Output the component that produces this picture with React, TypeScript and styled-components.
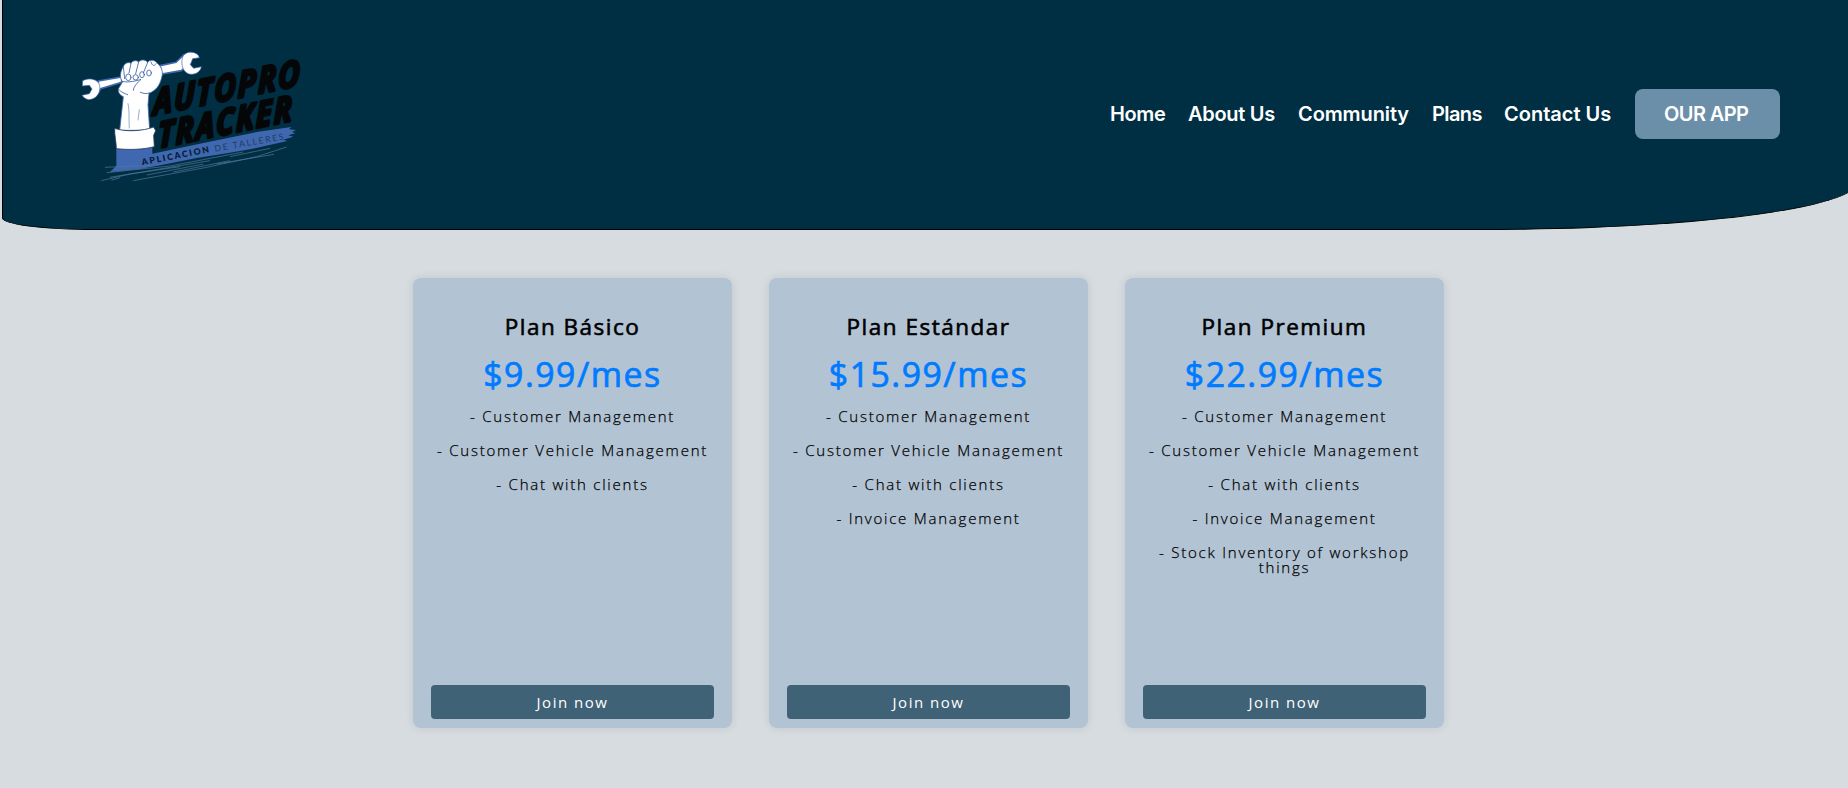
import React from "react";
import styled, { createGlobalStyle } from "styled-components";

const GlobalStyle = createGlobalStyle`
  * { box-sizing: border-box; }
  html, body { margin: 0; background: #d7dce0; }
  body { font-family: "Open Sans", "Noto Sans", sans-serif; overflow: hidden; }
`;

const Page = styled.div`
  height: 788px;
  overflow: hidden;
  background: #d7dce0;
`;

const Header = styled.header`
  display: flex;
  align-items: flex-start;
  justify-content: space-between;
  width: 1856px;
  height: 230px;
  margin-left: 2px;
  padding: 40px 77px 0 67px;
  background: #002f43;
  border: 1px solid #000;
  border-top: 0;
  border-radius: 0 0 376px 93px / 0 0 48px 12px;
`;

const LogoArt = styled.svg`
  display: block;
  width: 240px;
  height: 150px;
  overflow: visible;
`;

const Nav = styled.nav`
  display: flex;
  align-items: center;
  gap: 23px;
  height: 50px;
  margin-top: 49px;
`;

const NavLink = styled.a<{ $w: number; $spacing: number }>`
  width: ${(p) => p.$w}px;
  margin-left: -1px;
  margin-right: 1px;
  color: #fff;
  font: 600 20px/24px Inter, sans-serif;
  letter-spacing: ${(p) => p.$spacing}px;
  white-space: nowrap;
  text-decoration: none;
`;

const AppButton = styled.a`
  display: flex;
  align-items: center;
  width: 145px;
  height: 50px;
  padding-left: 29px;
  border-radius: 8px;
  background: #6b8fa9;
  color: #fff;
  font: 600 20px/24px Inter, sans-serif;
  letter-spacing: -0.6px;
  white-space: nowrap;
`;

const Plans = styled.main`
  display: flex;
  gap: 37px;
  padding: 48px 0 0 413px;
`;

const Card = styled.section`
  display: flex;
  flex-direction: column;
  align-items: center;
  width: 319px;
  height: 450px;
  padding: 37px 18px 9px;
  border-radius: 8px;
  background: #b2c3d4;
  box-shadow: 0 0 10px rgba(0, 0, 0, 0.1);
  text-align: center;
`;

const PlanName = styled.h2`
  margin: 0;
  color: #000;
  font-size: 22.5px;
  font-weight: 400;
  line-height: 24px;
  letter-spacing: 1.5px;
  -webkit-text-stroke: 0.6px #000;
`;

const Price = styled.p`
  margin: 18px 0 17px;
  color: #007bff;
  font-size: 33.8px;
  font-weight: 400;
  line-height: 35px;
  letter-spacing: 1.5px;
  -webkit-text-stroke: 0.7px #007bff;
`;

const Features = styled.ul`
  flex: 1;
  width: 283px;
  margin: 0;
  padding: 0;
  list-style: none;
`;

const Feature = styled.li`
  margin: 0 0 18.9px;
  color: #000;
  font-size: 15px;
  font-weight: 300;
  line-height: 15px;
  letter-spacing: 1.77px;
  -webkit-text-stroke: 0.25px #000;
`;

const JoinButton = styled.button`
  width: 282.4px;
  height: 34px;
  padding: 0;
  border: 0;
  border-radius: 4px;
  background: #406277;
  color: #fff;
  font: 400 15px/15px "Open Sans", sans-serif;
  letter-spacing: 1.5px;
`;

const links = [
  { label: "Home", w: 55, s: -0.4 },
  { label: "About Us", w: 87, s: -0.3 },
  { label: "Community", w: 111, s: -0.1 },
  { label: "Plans", w: 49, s: -0.6 },
  { label: "Contact Us", w: 107, s: 0 },
];

const base = ["Customer Management", "Customer Vehicle Management", "Chat with clients"];
const plans = [
  { name: "Plan Básico", price: "$9.99/mes", features: base },
  { name: "Plan Estándar", price: "$15.99/mes", features: [...base, "Invoice Management"] },
  {
    name: "Plan Premium",
    price: "$22.99/mes",
    features: [...base, "Invoice Management", "Stock Inventory of workshop things"],
  },
];

function Logo() {
  return (
    <LogoArt viewBox="0 0 720 450" role="img" aria-label="AutoPro Tracker">
      {/* brushed ribbon */}
      <path
        d="M139 326 L247 322 L247 341 L400 309 L560 276 L664 261 L657 268 L678 270 L666 276 L676 280 L655 286 L670 290 L640 299 L652 303 L540 328 L470 340 L380 354 L290 372 L215 386 L120 396 L139 378Z"
        fill="#3f68b0"
      />
      <g stroke="#54789f" fill="none" strokeWidth="2">
        <path d="M105 382 L240 376 M110 398 L300 378 L520 336 M94 422 L180 402 L330 380 M120 412 L420 362 M190 422 L400 384 L560 350 L650 321 M230 405 L400 372 M310 396 L480 362 M440 372 L612 343 M124 421 L150 413 M480 350 L600 325" />
      </g>
      {/* wrench */}
      <path
        d="M85 123 L155 111 L155 127 L92 146 L84 160 Z M270 77 L318 67 L341 45 L345 82 L334 92 L275 102Z"
        fill="#fff"
        stroke="#3f68b0"
        strokeWidth="5"
      />
      <path
        d="M38 122 C58 112 84 117 89 136 C93 161 76 179 56 179 C47 178 40 172 36 166 L58 161 L66 147 L58 136 L37 138Z"
        fill="#fff"
        stroke="#3f68b0"
        strokeWidth="2"
      />
      <path
        d="M385 46 C373 32 345 33 338 51 C330 77 342 101 362 103 C380 103 392 93 394 80 L371 85 L361 74 L368 56 L388 53Z"
        fill="#fff"
        stroke="#3f68b0"
        strokeWidth="2"
      />
      {/* fist and forearm */}
      <path
        d="M160 170 C149 166 142 154 146 145 L158 125 C147 113 150 94 163 74 C170 67 178 66 183 70 C188 60 200 60 206 66 C214 56 229 60 233 67 C239 58 255 59 262 70 C274 80 281 95 275 113 C269 137 258 151 237 160 L234 194 L239 271 L149 271 Z"
        fill="#fff"
        stroke="#3f68b0"
        strokeWidth="2.5"
      />
      <g fill="none" stroke="#31599c" strokeWidth="2.4" strokeLinecap="round">
        <path d="M158 125 C177 128 199 123 213 118 C202 129 191 138 190 151 M183 70 L177 99 M206 66 L197 101 M233 67 L220 99 M243 66 C247 79 253 79 258 71 M160 80 L164 116 M146 148 C154 158 166 161 173 164 M237 159 C229 162 221 161 211 157" />
        <path d="M174 191 C179 216 176 231 178 264 M208 209 L204 240" strokeWidth="1.5" />
        <ellipse cx="175" cy="112" rx="8" ry="10" />
        <ellipse cx="197" cy="112" rx="8" ry="8" />
        <ellipse cx="216" cy="104" rx="7" ry="9" />
        <ellipse cx="237" cy="99" rx="7" ry="9" />
      </g>
      <path
        d="M134 265 C162 276 219 274 251 261 L257 272 L251 286 L253 320 C220 329 176 330 139 326 C139 306 133 286 134 265Z"
        fill="#fff"
        stroke="#22395c"
        strokeWidth="2.5"
      />
      {/* wordmark */}
      <g
        fill="#050608"
        stroke="#050608"
        strokeWidth="9"
        strokeLinejoin="round"
        fontFamily="Open Sans, sans-serif"
        fontWeight="700"
        fontStyle="italic"
        letterSpacing="7"
      >
        <text transform="translate(250 226) rotate(-11.6) skewX(-12)" fontSize="106" textLength="454" lengthAdjust="spacingAndGlyphs">AUTOPRO</text>
        <text transform="translate(265 324) rotate(-11.6) skewX(-12)" fontSize="104" textLength="414" lengthAdjust="spacingAndGlyphs">TRACKER</text>
      </g>
      <g fontFamily="Lato, sans-serif" fontSize="26">
        <text transform="translate(217 376) rotate(-11)" fontWeight="800" fill="#0a2038" textLength="205">APLICACION</text>
        <text transform="translate(435 335) rotate(-10)" fontWeight="400" fill="#1d3d60" textLength="210">DE TALLERES</text>
      </g>
    </LogoArt>
  );
}

export default function App() {
  return (
    <Page>
      <GlobalStyle />
      <Header>
        <Logo />
        <Nav>
          {links.map((l) => (
            <NavLink key={l.label} $w={l.w} $spacing={l.s}>
              {l.label}
            </NavLink>
          ))}
          <AppButton>OUR APP</AppButton>
        </Nav>
      </Header>
      <Plans>
        {plans.map((p) => (
          <Card key={p.name}>
            <PlanName>{p.name}</PlanName>
            <Price>{p.price}</Price>
            <Features>
              {p.features.map((f) => (
                <Feature key={f}>- {f}</Feature>
              ))}
            </Features>
            <JoinButton>Join now</JoinButton>
          </Card>
        ))}
      </Plans>
    </Page>
  );
}
